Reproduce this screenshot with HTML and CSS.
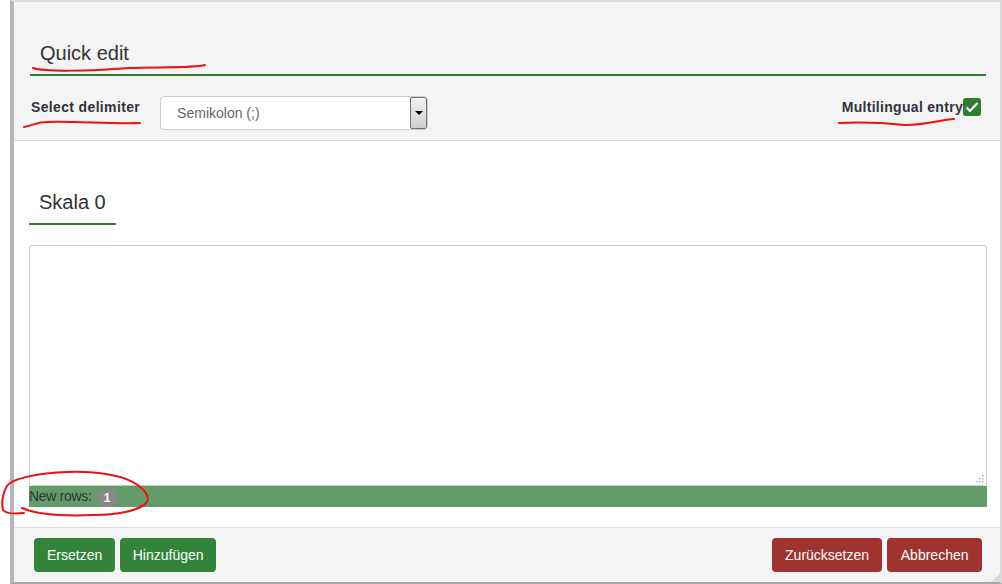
FILE: index.html
```html
<!DOCTYPE html>
<html lang="en">
<head>
  <meta charset="UTF-8" />
  <title>Quick edit</title>
  <link rel="stylesheet" href="styles.css">
</head>
<body>
  <div class="dialog">
    <div class="dialog-head">
      <h2 class="title">Quick edit</h2>
      <div class="options">
        <div class="delimiter">
          <label class="opt-label">Select delimiter</label>
          <div class="select">
            <span class="select-text">Semikolon (;)</span>
            <span class="select-arrow"><span class="caret"></span></span>
          </div>
        </div>
        <div class="multilingual">
          <label class="opt-label">Multilingual entry</label>
          <span class="check">
            <svg width="14" height="12" viewBox="0 0 14 12"><path d="M1.5 6.5 L5 10 L12.5 2" fill="none" stroke="#fff" stroke-width="2.2"/></svg>
          </span>
        </div>
      </div>
    </div>

    <div class="dialog-body">
      <h3 class="tab">Skala 0</h3>
      <div class="entry-wrap">
        <textarea class="entry"></textarea>
        <svg class="resize-dots" width="8" height="8" viewBox="0 0 8 8">
          <rect x="6" y="0" width="1.5" height="1.5"/>
          <rect x="3" y="3" width="1.5" height="1.5"/>
          <rect x="6" y="3" width="1.5" height="1.5"/>
          <rect x="0" y="6" width="1.5" height="1.5"/>
          <rect x="3" y="6" width="1.5" height="1.5"/>
          <rect x="6" y="6" width="1.5" height="1.5"/>
        </svg>
      </div>
      <div class="rows-bar"><span class="rows-text">New rows:</span><span class="badge">1</span></div>
    </div>

    <div class="dialog-foot">
      <div class="btn-group">
        <button class="btn green">Ersetzen</button>
        <button class="btn green add">Hinzufügen</button>
      </div>
      <div class="btn-group">
        <button class="btn red">Zurücksetzen</button>
        <button class="btn red cancel">Abbrechen</button>
      </div>
      <span class="grip"></span>
    </div>
  </div>

  <!-- red marker scribbles on top of the screenshot -->
  <svg class="marks" width="1002" height="584" viewBox="0 0 1002 584">
    <path d="M33 68 C45 72 90 71 130 68 C160 67 195 68 205 65"/>
    <path d="M24 127 C32 126 36 122 46 122 C75 121 110 124 140 123"/>
    <path d="M839 123 C860 122 885 123 905 125 C925 125 940 120 954 119"/>
    <path d="M24 513 C14 514 6 514 3 510 C1 503 3 492 7 486 C12 478 40 473 67 472 C95 471 126 475 139 486 C147 492 150 499 146 503 C139 511 115 515 95 515 C70 516 40 516 22 508"/>
  </svg>
</body>
</html>
```

FILE: styles.css
```css
html, body {
  height: 100%;
}

body {
  margin: 0;
  background-color: #fff;
  font-family: "Liberation Sans", Arial, sans-serif;
  color: #333;
  overflow: hidden;
}

.dialog {
  box-sizing: border-box;
  width: 992px;
  height: 584px;
  margin-left: 10px;
  background-color: #fff;
  border-top: 2px solid #dcdcdc;
  border-right: 2px solid #dcdcdc;
  border-bottom: 2px solid #a8a8a8;
  border-left: 4px solid #b6b6ba;
  display: flex;
  flex-direction: column;
}

.dialog-head {
  background-color: #f4f4f4;
  border-bottom: 1px solid #dcdcdc;
  padding: 39px 14px 10px 16px;
}

.title {
  margin: 0;
  padding: 0 0 9px 10px;
  font-size: 20px;
  line-height: 24px;
  font-weight: normal;
  border-bottom: 2px solid #2e7d32;
}

.options {
  display: flex;
  justify-content: space-between;
  align-items: flex-start;
  margin-top: 20px;
  height: 34px;
}

.delimiter {
  display: flex;
  align-items: flex-start;
  gap: 20px;
}

.opt-label {
  display: block;
  margin-top: 1px;
  font-size: 14px;
  line-height: 20px;
  font-weight: bold;
  letter-spacing: 0.35px;
  color: #33333f;
}

.delimiter .opt-label {
  margin-left: 1px;
}

.select {
  box-sizing: border-box;
  width: 268px;
  height: 34px;
  background-color: #fff;
  border: 1px solid #ccc;
  border-radius: 4px;
  display: flex;
  justify-content: space-between;
  overflow: hidden;
}

.select-text {
  padding-left: 16px;
  font-size: 14px;
  line-height: 32px;
  color: #666;
}

.select-arrow {
  box-sizing: border-box;
  width: 17px;
  border: 1px solid #707070;
  border-radius: 2px;
  background: linear-gradient(#f2f2f2, #cfcfcf);
  display: flex;
  align-items: center;
  justify-content: center;
}

.caret {
  width: 0;
  height: 0;
  border-left: 4px solid transparent;
  border-right: 4px solid transparent;
  border-top: 4px solid #000;
}

.multilingual {
  display: flex;
  align-items: flex-start;
  margin-right: 5px;
}

.multilingual .opt-label {
  letter-spacing: 0.3px;
}

.check {
  width: 18px;
  height: 18px;
  margin-top: 2px;
  background-color: #2e7d32;
  border-radius: 3px;
  display: flex;
  align-items: center;
  justify-content: center;
}

.dialog-body {
  flex: 1;
  padding: 49px 13px 0 15px;
}

.tab {
  display: inline-block;
  margin: 0;
  padding: 0 10px 9px 10px;
  font-size: 20px;
  line-height: 24px;
  font-weight: normal;
  border-bottom: 2px solid #2e7d32;
  vertical-align: top;
}

.entry-wrap {
  position: relative;
  margin-top: 20px;
}

.entry {
  display: block;
  box-sizing: border-box;
  width: 958px;
  height: 241px;
  margin: 0;
  background-color: #fff;
  border: 1px solid #ccc;
  border-radius: 3px;
  outline: none;
  resize: none;
}

.resize-dots {
  position: absolute;
  right: 3px;
  bottom: 3px;
  fill: #b4b4b4;
}

.rows-bar {
  display: flex;
  align-items: flex-start;
  height: 21px;
  background-color: #639c6b;
}

.rows-text {
  font-size: 14px;
  line-height: 21px;
  letter-spacing: -0.3px;
  color: #333;
}

.badge {
  width: 21px;
  height: 18px;
  margin: 3px 0 0 5px;
  line-height: 19px;
  border-radius: 9px;
  background-color: #888;
  color: #fff;
  font-size: 12px;
  font-weight: bold;
  text-align: center;
}

.dialog-foot {
  position: relative;
  background-color: #f4f4f4;
  border-top: 1px solid #dcdcdc;
  padding: 10px 18px 10px 20px;
  display: flex;
  justify-content: space-between;
}

.btn-group {
  display: flex;
  gap: 5px;
}

.btn {
  height: 34px;
  padding: 0 12px;
  font-family: inherit;
  font-size: 14px;
  color: #fff;
  border: 1px solid transparent;
  border-radius: 4px;
  cursor: pointer;
}

.green {
  background-color: #33843a;
}

.add {
  padding: 0 11.5px;
}

.red {
  padding: 0 12.2px;
  background-color: #a0332f;
}

.cancel {
  padding: 0 12.5px;
}

.grip {
  position: absolute;
  right: 0;
  bottom: 0;
  width: 9px;
  height: 9px;
  background: linear-gradient(135deg, transparent 50%, #dcdcdc 50%);
}

.marks {
  position: absolute;
  left: 0;
  top: 0;
  pointer-events: none;
}

.marks path {
  fill: none;
  stroke: #ee1111;
  stroke-width: 2;
  stroke-linecap: round;
}
```
